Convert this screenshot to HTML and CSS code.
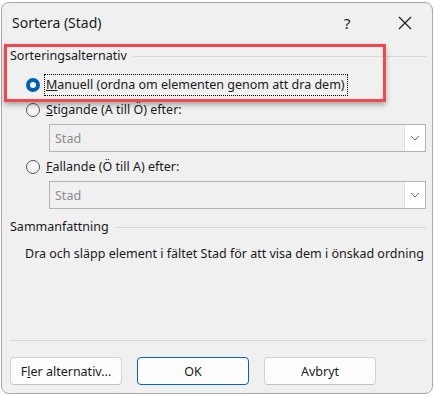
FILE: index.html
```html
<!DOCTYPE html>
<html lang="sv">
<head>
<meta charset="utf-8">
<link rel="stylesheet" href="styles.css">
</head>
<body>
<div class="window">
  <div class="titlebar">
    <span class="title">Sortera (Stad)</span>
    <span class="help">?</span>
    <span class="close"><svg width="14" height="14" viewBox="0 0 14 14"><path d="M1 1L13 13M13 1L1 13" stroke="#1a1a1a" stroke-width="1.2" fill="none"/></svg></span>
  </div>
  <div class="content">
    <div class="highlight"></div>
    <div class="group-head"><span>Sorteringsalternativ</span><i class="rule"></i></div>
    <div class="radio-row first">
      <span class="radio checked"></span>
      <span class="label focus"><u>M</u>anuell (ordna om elementen genom att dra dem)</span>
    </div>
    <div class="radio-row">
      <span class="radio"></span>
      <span class="label"><u>S</u>tigande (A till Ö) efter:</span>
    </div>
    <div class="combo">
      <span class="combo-text">Stad</span>
      <span class="combo-btn"><svg width="10" height="6" viewBox="0 0 10 6"><path d="M1 1L5 5L9 1" stroke="#777" stroke-width="1" fill="none"/></svg></span>
    </div>
    <div class="radio-row">
      <span class="radio"></span>
      <span class="label"><u>F</u>allande (Ö till A) efter:</span>
    </div>
    <div class="combo">
      <span class="combo-text">Stad</span>
      <span class="combo-btn"><svg width="10" height="6" viewBox="0 0 10 6"><path d="M1 1L5 5L9 1" stroke="#777" stroke-width="1" fill="none"/></svg></span>
    </div>
    <div class="group-head summary-head"><span>Sammanfattning</span><i class="rule"></i></div>
    <div class="summary">Dra och släpp element i fältet Stad för att visa dem i önskad ordning</div>
    <div class="footer">
      <div class="separator"></div>
      <div class="buttons">
        <button class="btn">F<u>l</u>er alternativ...</button>
        <button class="btn primary">OK</button>
        <button class="btn">Avbryt</button>
      </div>
    </div>
  </div>
</div>
</body>
</html>
```

FILE: styles.css
```css
* { box-sizing: border-box; }
html, body { margin: 0; padding: 0; background: #ffffff; }
body {
  width: 435px;
  height: 396px;
  overflow: hidden;
  font-family: "Segoe UI", "Noto Sans", "Open Sans", sans-serif;
  font-size: 12.5px;
  color: #1a1a1a;
}
.window {
  margin: 2px 0 0 1px;
  width: 432px;
  height: 392px;
  background: #f0f0f0;
  border: 1px solid #a8a8a8;
  border-radius: 8px;
  display: flex;
  flex-direction: column;
  position: relative;
}
.titlebar {
  height: 41px;
  display: flex;
  align-items: center;
  padding-left: 10px;
  flex: none;
}
.title { font-size: 14px; flex: 1; margin-top: -2px; }
.help { font-size: 15px; width: 14px; margin-right: 40px; margin-top: -2px; }
.close { width: 14px; margin-right: 20px; display: flex; margin-top: -2px; }
.content {
  flex: 1;
  display: flex;
  flex-direction: column;
  padding: 4px 6px 8px 8px;
  position: relative;
}
.highlight {
  position: absolute;
  left: 2px;
  top: 0;
  width: 382px;
  height: 58px;
  border: 3px solid #f2474d;
  box-shadow: 0 3px 5px rgba(0,0,0,0.3);
  pointer-events: none;
}
.group-head {
  height: 16px;
  display: flex;
  align-items: center;
  line-height: 16px;
}
.group-head span { padding-right: 6px; }
.rule { flex: 1; height: 1px; background: #d8d8d8; margin-top: 0; }
.radio-row {
  height: 20px;
  display: flex;
  align-items: center;
  margin-top: 5px;
  padding-left: 16px;
}
.radio-row.first { margin-top: 11px; }
.radio {
  width: 14px;
  height: 14px;
  border-radius: 50%;
  border: 1px solid #555;
  background: #f5f5f5;
  margin-right: 4px;
  flex: none;
}
.radio.checked {
  background: #fff;
  border: 4.5px solid #005fb8;
}
.label { line-height: 16px; padding: 0 2px 0 1px; border: 1px dotted transparent; }
.label.focus { border-color: #000; padding: 2px 2px 2px 1px; }
.combo {
  margin: 4px 0 0 39px;
  height: 28px;
  border: 1px solid #b4b4b4;
  display: flex;
  align-items: center;
}
.combo-text { flex: 1; padding-left: 5px; color: #8c8c8c; }
.combo-btn {
  width: 21px;
  height: 26px;
  background: #ffffff;
  border-left: 1px solid #e0e0e0;
  display: flex;
  align-items: center;
  justify-content: center;
}
.summary-head { margin-top: 10px; }
.summary { margin-top: 11px; padding-left: 15px; line-height: 16px; }
.footer { margin-top: auto; }
.separator { height: 1px; background: #d8d8d8; }
.buttons {
  display: flex;
  gap: 15px;
  margin-top: 16px;
}
.btn {
  width: 112px;
  height: 28px;
  font: inherit;
  color: #1a1a1a;
  background: #fdfdfd;
  border: 1px solid #d3d3d3;
  border-bottom-color: #c2c2c2;
  border-radius: 4px;
  padding: 0;
}
.btn.primary { border-color: #0067c0; }
```
